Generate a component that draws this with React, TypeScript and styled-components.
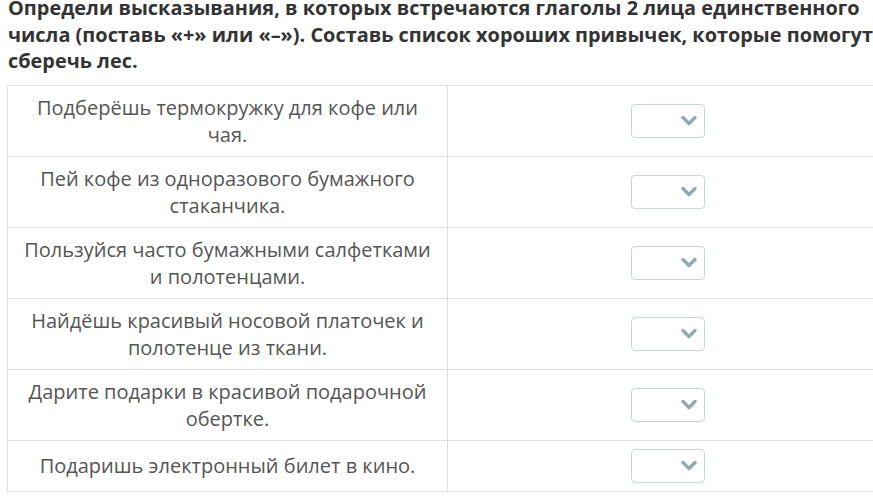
import React from "react";
import styled, { createGlobalStyle } from "styled-components";

const GlobalStyle = createGlobalStyle`
    body {
        margin: 0;
        background: #ffffff;
        font-family: "Open Sans", "Liberation Sans", sans-serif;
        overflow: hidden;
    }
`

const Page = styled.div`
    padding: 0 7px;
    width: 900px;
`

const Title = styled.p`
    margin: -5px 0 10px 1px;
    font-size: 19.9px;
    line-height: 26.5px;
    font-weight: 700;
    color: #333333;
    width: 895px;
`

const Table = styled.table`
    border-collapse: collapse;
    width: 881px;
    table-layout: fixed;
`

const Cell = styled.td`
    border: 1px solid #dddddd;
    padding: 8px 12px;
    font-size: 20px;
    line-height: 27px;
    color: #555555;
    text-align: center;
    vertical-align: middle;
`

const SelectBox = styled.div`
    display: inline-flex;
    align-items: center;
    justify-content: flex-end;
    box-sizing: border-box;
    width: 74px;
    height: 34px;
    padding-right: 7px;
    border: 1px solid #c9d6d8;
    border-radius: 4px;
    background: #ffffff;
    vertical-align: middle;
`

const Chevron = () => (
    <svg width="16" height="11" viewBox="0 0 16 11">
        <path d="M2 2.5 L8 8.5 L14 2.5" fill="none" stroke="#8eabaf" strokeWidth="3.4" strokeLinecap="round" strokeLinejoin="round" />
    </svg>
)

const rows = [
    "Подберёшь термокружку для кофе или чая.",
    "Пей кофе из одноразового бумажного стаканчика.",
    "Пользуйся часто бумажными салфетками и полотенцами.",
    "Найдёшь красивый носовой платочек и полотенце из ткани.",
    "Дарите подарки в красивой подарочной обертке.",
    "Подаришь электронный билет в кино.",
];

const App: React.FC = () => {
    return (
        <Page>
            <GlobalStyle />
            <Title>
                Определи высказывания, в которых встречаются глаголы 2 лица единственного числа (поставь «+» или «–»). Составь список хороших привычек, которые помогут сберечь лес.
            </Title>
            <Table>
                <tbody>
                    {rows.map((text) => (
                        <tr key={text}>
                            <Cell>{text}</Cell>
                            <Cell>
                                <SelectBox><Chevron /></SelectBox>
                            </Cell>
                        </tr>
                    ))}
                </tbody>
            </Table>
        </Page>
    )
}

export default App;
